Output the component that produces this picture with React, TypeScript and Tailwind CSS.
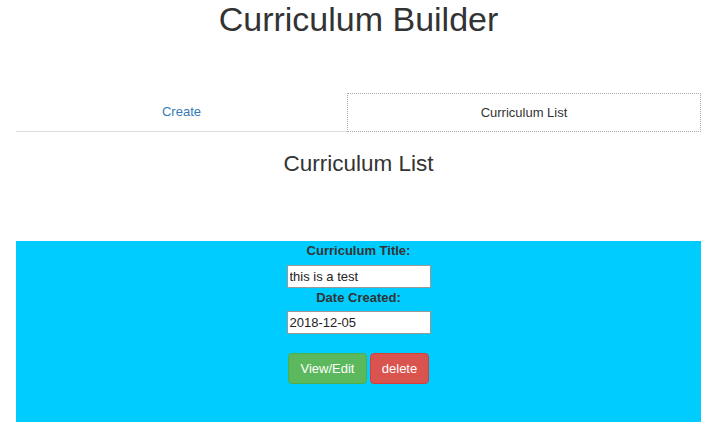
import React from "react";

export default function App() {
  return (
    <div
      className="w-[717px] min-h-[439px] bg-white text-[#333]"
      style={{ fontFamily: '"Liberation Sans", Arial, sans-serif' }}
    >
      <h1 className="m-0 mt-[-1px] text-center text-[34px] leading-[40px] font-normal text-[#333]">
        Curriculum Builder
      </h1>

      <div className="mx-[16px] mt-[54px] flex">
        <div className="w-[331px] h-[39px] border-b border-[#ddd] flex items-center justify-center text-[13px] text-[#337ab7]">
          Create
        </div>
        <div className="w-[354px] h-[39px] border border-dotted border-[#aaa] flex items-center justify-center text-[13px] text-[#333]">
          Curriculum List
        </div>
      </div>

      <h3 className="m-0 mt-[19px] text-center text-[22.5px] leading-[26px] font-normal text-[#333]">
        Curriculum List
      </h3>

      <div className="mx-[16px] mt-[64px] h-[181px] bg-[#00ccff] flex flex-col items-center">
        <label className="text-[13px] font-bold leading-[19px] mb-[5px] text-[#333]">
          Curriculum Title:
        </label>
        <input
          readOnly
          value="this is a test"
          className="w-[144px] h-[23px] bg-white border border-[#999] px-[2px] text-[13px] text-[#222] outline-none"
          style={{ fontFamily: '"Liberation Sans", Arial, sans-serif' }}
        />
        <label className="text-[13px] font-bold leading-[19px] mb-[4px] text-[#333]">
          Date Created:
        </label>
        <input
          readOnly
          value="2018-12-05"
          className="w-[144px] h-[23px] bg-white border border-[#999] px-[2px] text-[13px] text-[#222] outline-none"
          style={{ fontFamily: '"Liberation Sans", Arial, sans-serif' }}
        />
        <div className="mt-[19px] flex gap-[3px]">
          <button className="h-[31px] w-[79px] rounded-[4px] border border-[#4cae4c] bg-[#5cb85c] text-white text-[13px]">
            View/Edit
          </button>
          <button className="h-[31px] w-[59px] rounded-[4px] border border-[#d43f3a] bg-[#d9534f] text-white text-[13px]">
            delete
          </button>
        </div>
      </div>
    </div>
  );
}
